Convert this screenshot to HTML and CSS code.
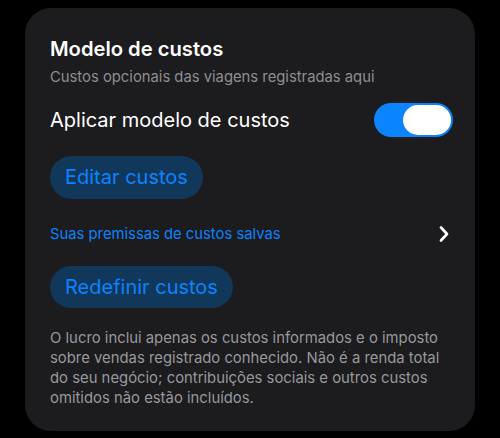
FILE: index.html
```html
<!DOCTYPE html>
<html lang="pt-BR">
<head>
    <meta charset="UTF-8">
    <meta name="viewport" content="width=device-width, initial-scale=1.0">
    <title>Modelo de custos</title>
    <link rel="stylesheet" href="styles.css">
</head>
<body>

<div class="cost-card">
    <h1 class="card-title">Modelo de custos</h1>
    <p class="card-subtitle">Custos opcionais das viagens registradas aqui</p>

    <!-- Aplicar modelo -->
    <div class="toggle-row">
        <span class="toggle-label">Aplicar modelo de custos</span>
        <span class="switch on"><span class="knob"></span></span>
    </div>

    <button class="pill-button">Editar custos</button>

    <!-- Premissas salvas -->
    <div class="link-row">
        <span>Suas premissas de custos salvas</span>
        <svg class="chevron" width="10" height="16" viewBox="0 0 10 16">
            <path d="M2 1.5 L8 8 L2 14.5" fill="none" stroke="#fff" stroke-width="2.6" stroke-linecap="round" stroke-linejoin="round"/>
        </svg>
    </div>

    <button class="pill-button">Redefinir custos</button>

    <p class="footnote">O lucro inclui apenas os custos informados e o imposto sobre vendas registrado conhecido. Não é a renda total do seu negócio; contribuições sociais e outros custos omitidos não estão incluídos.</p>
</div>

</body>
</html>
```

FILE: styles.css
```css
body {
    margin: 0;
    padding: 8px 25px;
    background-color: #000;
    font-family: Inter, "Noto Sans", sans-serif;
}
.cost-card {
    background-color: #1c1c1e;
    border-radius: 26px;
    padding: 28px 22px 24px 25px;
    height: 423px;
    box-sizing: border-box;
}
.card-title {
    margin: 0;
    color: #fff;
    font-size: 20.2px;
    font-weight: 600;
    line-height: 26px;
}
.card-subtitle {
    margin: 6px 0 0;
    color: #8e8e93;
    font-size: 14.8px;
    line-height: 18px;
}
.toggle-row {
    display: flex;
    justify-content: space-between;
    align-items: center;
    margin-top: 17px;
}
.toggle-label {
    color: #fff;
    font-size: 20px;
    line-height: 26px;
}
.switch {
    width: 79px;
    height: 34px;
    border-radius: 17px;
    background-color: #0a84ff;
    display: flex;
    align-items: center;
    justify-content: flex-end;
    padding: 0 2px;
    box-sizing: border-box;
}
.knob {
    width: 48px;
    height: 30px;
    border-radius: 15px;
    background-color: #fff;
}
.pill-button {
    display: block;
    background-color: #11375a;
    color: #0a84ff;
    border: none;
    border-radius: 22px;
    font-family: inherit;
    font-size: 20px;
    line-height: 26px;
    padding: 8px 15px 9px;
    margin-top: 19px;
}
.link-row {
    display: flex;
    justify-content: space-between;
    align-items: center;
    margin-top: 26px;
    color: #0a84ff;
    font-size: 14.8px;
    line-height: 18px;
    padding-right: 4px;
}
.link-row + .pill-button {
    margin-top: 23px;
    padding-bottom: 8px;
}
.footnote {
    margin: 20px 0 0;
    color: #98989d;
    font-size: 14.85px;
    line-height: 20px;
}
```
